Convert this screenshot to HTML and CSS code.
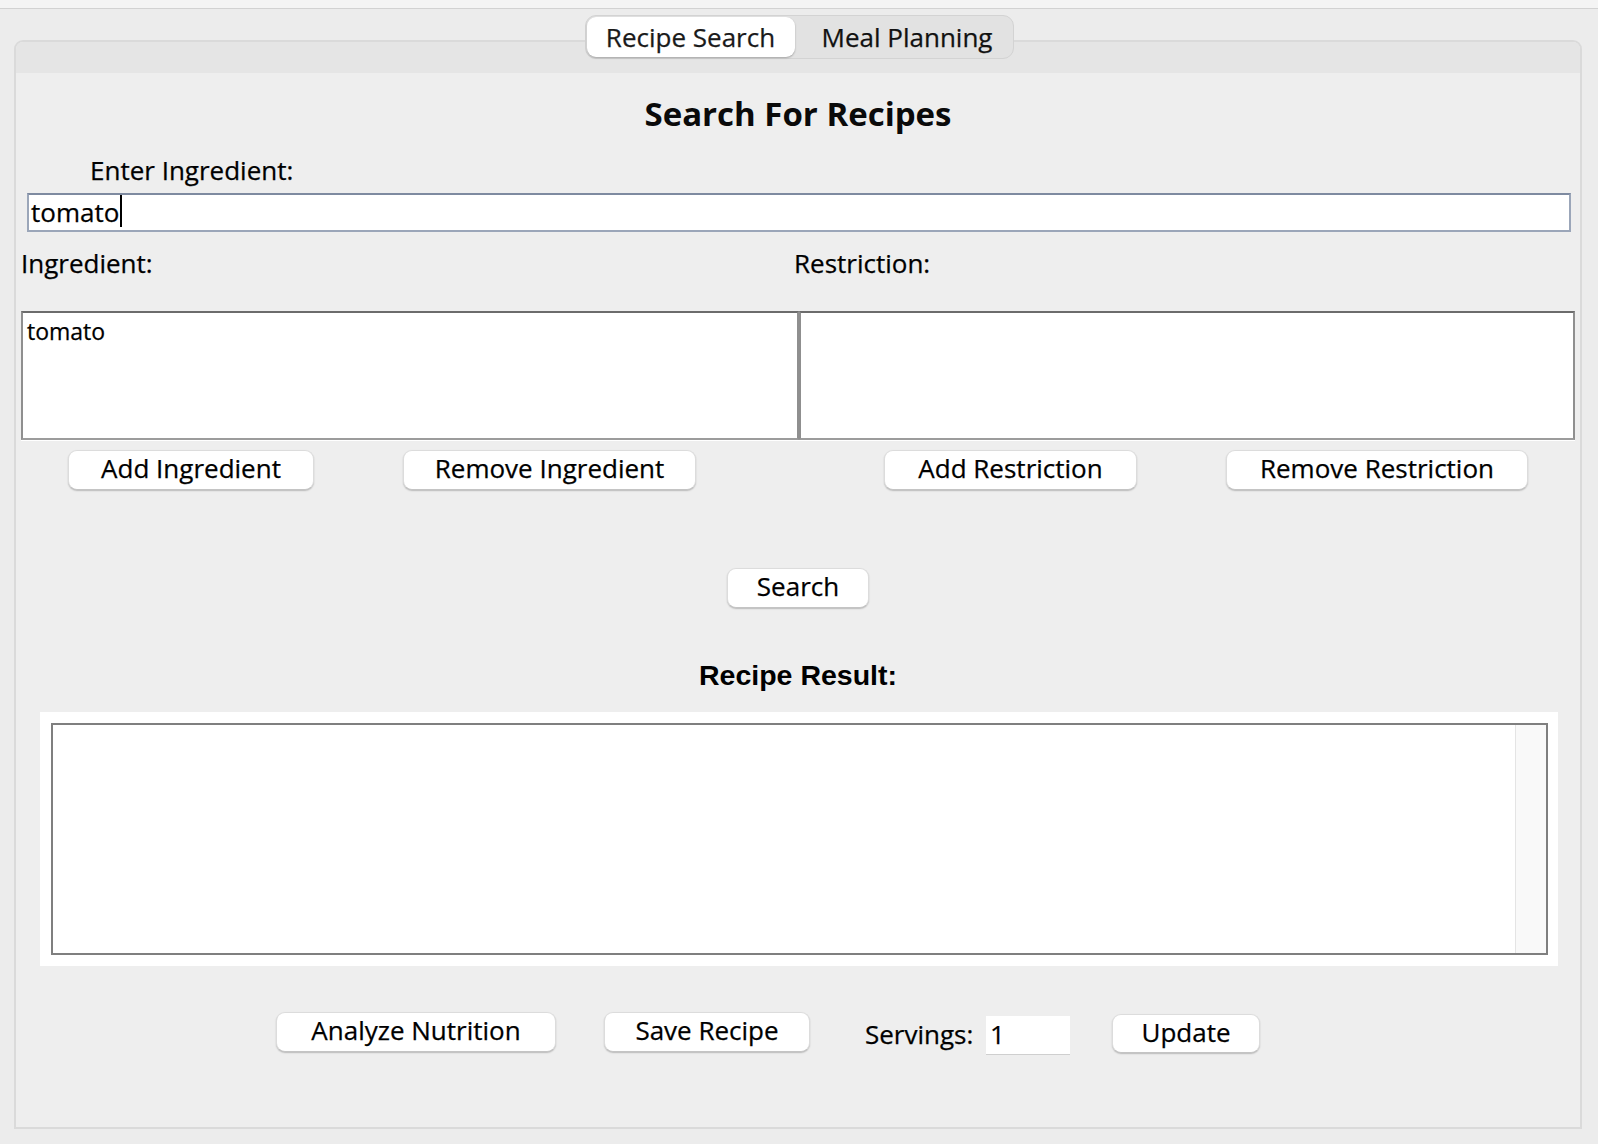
FILE: index.html
```html
<!DOCTYPE html>
<html lang="en">
<head>
<meta charset="utf-8">
<title>Recipe Search</title>
<link rel="stylesheet" href="styles.css">
</head>
<body>
<div class="window">
  <div class="top-strip"></div>
  <div class="tabs-wrap">
    <div class="tabs">
      <div class="tab tab-active">Recipe Search</div>
      <div class="tab tab-other">Meal Planning</div>
    </div>
  </div>
  <div class="panel">
    <div class="panel-band"></div>
    <div class="content">
      <h1 class="title">Search For Recipes</h1>
      <div class="enter-label">Enter Ingredient:</div>
      <div class="text-field">tomato<span class="caret"></span></div>
      <div class="labels-row">
        <div class="label">Ingredient:</div>
        <div class="label">Restriction:</div>
      </div>
      <div class="lists">
        <div class="list"><div class="list-item">tomato</div></div>
        <div class="list list-right"></div>
      </div>
      <div class="btn-row">
        <button class="btn btn-add-ing">Add Ingredient</button>
        <button class="btn btn-rem-ing">Remove Ingredient</button>
        <button class="btn btn-add-res">Add Restriction</button>
        <button class="btn btn-rem-res">Remove Restriction</button>
      </div>
      <button class="btn btn-search">Search</button>
      <div class="result-label">Recipe Result:</div>
      <div class="result-outer">
        <div class="result-box">
          <div class="result-text"></div>
          <div class="scroll-track"></div>
        </div>
      </div>
      <div class="bottom-row">
        <button class="btn btn-analyze">Analyze Nutrition</button>
        <button class="btn btn-save">Save Recipe</button>
        <div class="servings-label">Servings:</div>
        <div class="servings-field">1</div>
        <button class="btn btn-update">Update</button>
      </div>
    </div>
  </div>
</div>
</body>
</html>
```

FILE: styles.css
```css
* { box-sizing: border-box; }

html, body {
  margin: 0;
  padding: 0;
}

body {
  width: 1598px;
  height: 1144px;
  overflow: hidden;
  background: #e9e9e9;
  font-family: "Open Sans", "DejaVu Sans", sans-serif;
  color: #000;
  -webkit-text-stroke: 0.25px currentColor;
}

.window {
  display: flex;
  flex-direction: column;
  height: 100%;
  background: #ececec;
}

.top-strip {
  height: 9px;
  background: #f4f4f4;
  border-bottom: 1px solid #d2d2d2;
}

.tabs-wrap {
  display: flex;
  justify-content: center;
  margin-top: 6px;
  margin-bottom: -19px;
  position: relative;
  z-index: 2;
}

.tabs {
  display: flex;
  align-items: center;
  width: 429px;
  height: 44px;
  padding: 0 1px;
  background: #e2e2e2;
  border: 1px solid #d3d3d3;
  border-radius: 11px;
}

.tab {
  height: 40px;
  line-height: 40px;
  font-size: 26px;
  text-align: center;
  color: #111;
  flex: 1;
}

.tab-other {
  padding-left: 8px;
}

.tab-active {
  flex: 0 0 208px;
  background: #fff;
  border-radius: 9px;
  box-shadow: 0 1px 2px rgba(0, 0, 0, 0.28);
  color: #1a1a1a;
}

.panel {
  margin-left: 14px;
  width: 1568px;
  height: 1089px;
  background: #eeeeee;
  border: 2px solid #dadada;
  border-radius: 9px 9px 0 0;
  display: flex;
  flex-direction: column;
}

.panel-band {
  height: 31px;
  background: #e5e5e5;
  border-radius: 7px 7px 0 0;
  flex: none;
}

.content {
  padding: 0 5px;
  display: flex;
  flex-direction: column;
}

.title {
  margin: 21px 0 0;
  font-size: 33px;
  line-height: 40px;
  font-weight: 700;
  text-align: center;
  color: #0a0a0a;
  -webkit-text-stroke: 0;
}

.enter-label {
  margin: 21px 0 0 69px;
  font-size: 26px;
  line-height: 30px;
}

.text-field {
  margin: 8px 4px 0 6px;
  height: 39px;
  background: #fff;
  border: 2px solid #9ba6b9;
  border-top-color: #7e8aa0;
  padding: 0 2px;
  font-size: 26px;
  line-height: 35px;
}

.caret {
  display: inline-block;
  width: 2px;
  height: 32px;
  background: #000;
  vertical-align: -5px;
  margin-left: 1px;
}

.labels-row {
  display: grid;
  grid-template-columns: 773px 1fr;
  margin-top: 16px;
}

.label {
  font-size: 26px;
  line-height: 30px;
}

.lists {
  display: grid;
  grid-template-columns: 778px 1fr;
  margin-top: 33px;
}

.list {
  height: 129px;
  background: #fff;
  border: 2px solid #8f8f8f;
  border-top-color: #6c6c6c;
  border-bottom-color: #9c9c9c;
  box-shadow: 0 1px 0 #ffffff;
  padding: 3px 4px;
}

.list-item {
  font-size: 23px;
  line-height: 30px;
}

.btn {
  display: block;
  height: 40px;
  padding: 0 0 6px;
  margin: 0;
  font-family: "Open Sans", "DejaVu Sans", sans-serif;
  font-size: 26px;
  line-height: 34px;
  color: #000;
  text-align: center;
  background: #fff;
  border: 1px solid #dcdcdc;
  border-bottom-color: #c4c4c4;
  border-radius: 9px;
  box-shadow: 0 1px 1.5px rgba(0, 0, 0, 0.22);
  white-space: nowrap;
}

.btn-row {
  display: flex;
  margin-top: 10px;
}

.btn-add-ing { width: 246px; margin-left: 47px; }
.btn-rem-ing { width: 293px; margin-left: 89px; }
.btn-add-res { width: 253px; margin-left: 188px; }
.btn-rem-res { width: 302px; margin-left: 89px; }

.btn-search {
  width: 142px;
  margin: 78px auto 0;
}

.result-label {
  margin-top: 51px;
  font-family: "Liberation Sans", Arial, sans-serif;
  font-weight: 700;
  font-size: 28.5px;
  line-height: 32px;
  text-align: center;
  color: #000;
  -webkit-text-stroke: 0;
}

.result-outer {
  margin: 21px 17px 0 19px;
  height: 254px;
  background: #fff;
  padding: 11px 10px 11px 11px;
}

.result-box {
  height: 100%;
  border: 2px solid #7f7f7f;
  display: flex;
}

.result-text {
  flex: 1;
  background: #fff;
}

.scroll-track {
  width: 31px;
  background: #f9f9f9;
  border-left: 1px solid #e4e4e4;
}

.bottom-row {
  display: flex;
  align-items: flex-start;
  margin-top: 46px;
  padding-left: 255px;
}

.btn-analyze { width: 280px; }
.btn-save { width: 206px; margin-left: 48px; }

.servings-label {
  margin: 7px 0 0 55px;
  width: 112px;
  font-size: 26px;
  line-height: 30px;
  white-space: nowrap;
}

.servings-field {
  margin: 4px 0 0 9px;
  width: 84px;
  height: 38px;
  background: #fff;
  box-shadow: 0 1px 0 #cfcfcf;
  padding: 0 4px;
  font-size: 26px;
  line-height: 36px;
}

.btn-update {
  width: 148px;
  height: 39px;
  margin: 2px 0 0 42px;
}
```
